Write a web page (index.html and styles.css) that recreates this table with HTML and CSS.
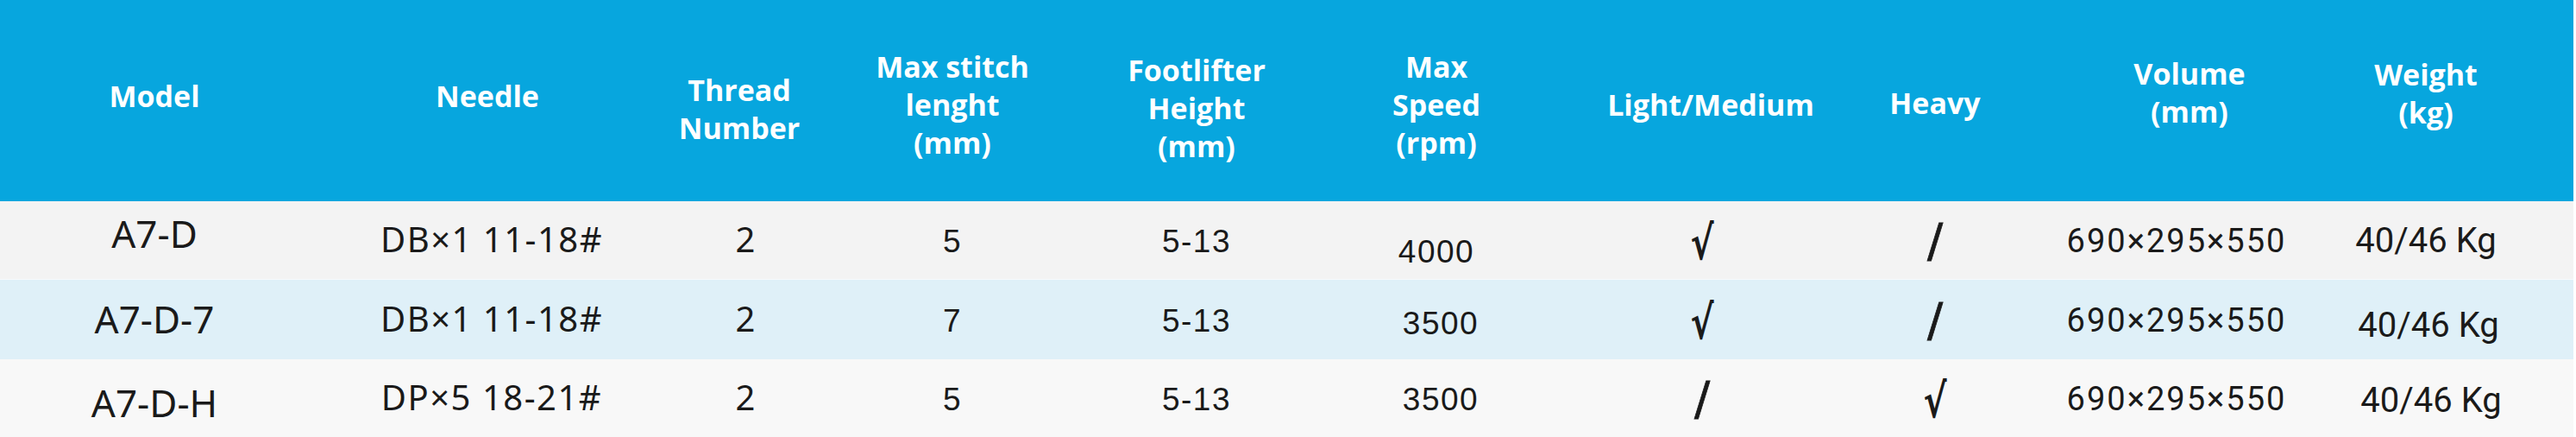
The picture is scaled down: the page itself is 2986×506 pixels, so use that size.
FILE: index.html
```html
<!DOCTYPE html>
<html lang="en">
<head>
<meta charset="utf-8">
<title>A7-D specifications</title>
<link rel="stylesheet" href="styles.css">
</head>
<body>
<div class="spec">
  <div class="row head">
    <div class="th t-model">Model</div>
    <div class="th t-needle">Needle</div>
    <div class="th t-thread">Thread<br>Number</div>
    <div class="th t-stitch">Max stitch<br>lenght<br>(mm)</div>
    <div class="th t-foot">Footlifter<br>Height<br>(mm)</div>
    <div class="th t-speed">Max<br>Speed<br>(rpm)</div>
    <div class="th t-light">Light/Medium</div>
    <div class="th t-heavy">Heavy</div>
    <div class="th t-volume">Volume<br>(mm)</div>
    <div class="th t-weight">Weight<br>(kg)</div>
  </div>

  <div class="row body r1">
    <div class="td"><span class="f-model up5">A7-D</span></div>
    <div class="td c-needle"><span class="f-needle">DB×1 11-18#</span></div>
    <div class="td c-thread"><span class="f-noto">2</span></div>
    <div class="td"><span class="f-arial">5</span></div>
    <div class="td"><span class="f-arial">5-13</span></div>
    <div class="td"><span class="f-arial dn12">4000</span></div>
    <div class="td c-light"><span class="f-mark">√</span></div>
    <div class="td"><span class="f-slash">/</span></div>
    <div class="td c-volume"><span class="f-roboto">690×295×550</span></div>
    <div class="td"><span class="f-weight">40/46 Kg</span></div>
  </div>

  <div class="row body r2">
    <div class="td"><span class="f-model dn2">A7-D-7</span></div>
    <div class="td c-needle"><span class="f-needle">DB×1 11-18#</span></div>
    <div class="td c-thread"><span class="f-noto">2</span></div>
    <div class="td"><span class="f-arial">7</span></div>
    <div class="td"><span class="f-arial">5-13</span></div>
    <div class="td c-speed2"><span class="f-arial dn3">3500</span></div>
    <div class="td c-light"><span class="f-mark">√</span></div>
    <div class="td"><span class="f-slash">/</span></div>
    <div class="td c-volume"><span class="f-roboto">690×295×550</span></div>
    <div class="td c-weight2"><span class="f-weight dn6">40/46 Kg</span></div>
  </div>

  <div class="row body r3">
    <div class="td"><span class="f-model dn8">A7-D-H</span></div>
    <div class="td c-needle"><span class="f-needle">DP×5 18-21#</span></div>
    <div class="td c-thread"><span class="f-noto">2</span></div>
    <div class="td"><span class="f-arial">5</span></div>
    <div class="td"><span class="f-arial">5-13</span></div>
    <div class="td c-speed2"><span class="f-arial">3500</span></div>
    <div class="td c-light"><span class="f-slash">/</span></div>
    <div class="td"><span class="f-mark">√</span></div>
    <div class="td c-volume"><span class="f-roboto">690×295×550</span></div>
    <div class="td c-weight3"><span class="f-weight dn2">40/46 Kg</span></div>
  </div>
</div>
</body>
</html>
```

FILE: styles.css
```css
* { box-sizing: border-box; }

html, body {
  margin: 0;
  padding: 0;
  background: #ffffff;
}

.spec {
  width: 2983px;
  color: #1a1a1a;
}

.row {
  display: grid;
  grid-template-columns: 358px 414px 176px 312px 254px 302px 328px 198px 376px 188px 1fr;
}

/* ---------- header ---------- */
.head {
  height: 233px;
  background: #07a6de;
}

.th {
  font-family: "Open Sans", "Liberation Sans", sans-serif;
  font-weight: 700;
  font-size: 34px;
  line-height: 44px;
  color: #ffffff;
  text-align: center;
  white-space: nowrap;
}

.t-model  { padding-top: 89px; }
.t-needle { padding-top: 89px; }
.t-thread { padding-top: 82px; padding-right: 6px; }
.t-stitch { padding-top: 55px; }
.t-foot   { padding-top: 59px; }
.t-speed  { padding-top: 55px; }
.t-light  { padding-top: 99px; padding-left: 6px; }
.t-heavy  { padding-top: 97px; }
.t-volume { padding-top: 63px; padding-left: 16px; }
.t-weight { padding-top: 64px; }

/* ---------- body rows ---------- */
.body .td {
  font-family: "Liberation Sans", Arial, sans-serif;
  font-size: 38px;
  line-height: 88px;
  padding-top: 2px;
  text-align: center;
  white-space: nowrap;
}

.r1 { background: #f3f3f3; }
.r2 { background: #dff0f8; border-top: 1px solid #f7fafb; }
.r2 .td { line-height: 90px; }
.r3 { background: #f8f8f8; }

.body span { line-height: 1; }

.c-needle { padding-left: 10px; }
.c-thread { padding-left: 8px; }
.c-light  { padding-right: 14px; }
.c-speed2 { padding-left: 10px; }
.c-volume { padding-right: 14px; }
.c-weight2 { padding-left: 6px; }
.c-weight3 { padding-left: 12px; }

.f-model {
  font-family: "Noto Sans", "Open Sans", sans-serif;
  font-size: 44px;
}
.f-needle {
  font-family: "Noto Sans", "Open Sans", sans-serif;
  font-size: 40px;
  letter-spacing: 1.5px;
}
.f-noto {
  font-family: "Noto Sans", "Open Sans", sans-serif;
  font-size: 40px;
}
.f-arial {
  font-family: "Liberation Sans", Arial, sans-serif;
  font-size: 37px;
  letter-spacing: 1.5px;
}
.f-mark {
  display: inline-block;
  font-family: "DejaVu Sans", sans-serif;
  font-weight: 700;
  font-size: 54px;
  vertical-align: -8px;
  transform: scaleX(0.75);
}
.f-slash {
  display: inline-block;
  font-family: "DejaVu Sans", sans-serif;
  font-weight: 400;
  font-size: 54px;
  vertical-align: -5px;
  -webkit-text-stroke: 0.8px #1a1a1a;
}
.f-roboto {
  font-family: Roboto, "Liberation Sans", sans-serif;
  font-size: 38px;
  letter-spacing: 2px;
}
.f-weight {
  font-family: Roboto, "Liberation Sans", sans-serif;
  font-size: 40px;
}

.up5  { vertical-align: 5px; }
.dn2  { vertical-align: -2px; }
.dn3  { vertical-align: -3px; }
.dn6  { vertical-align: -6px; }
.dn8  { vertical-align: -8px; }
.dn12 { vertical-align: -12px; }
```
